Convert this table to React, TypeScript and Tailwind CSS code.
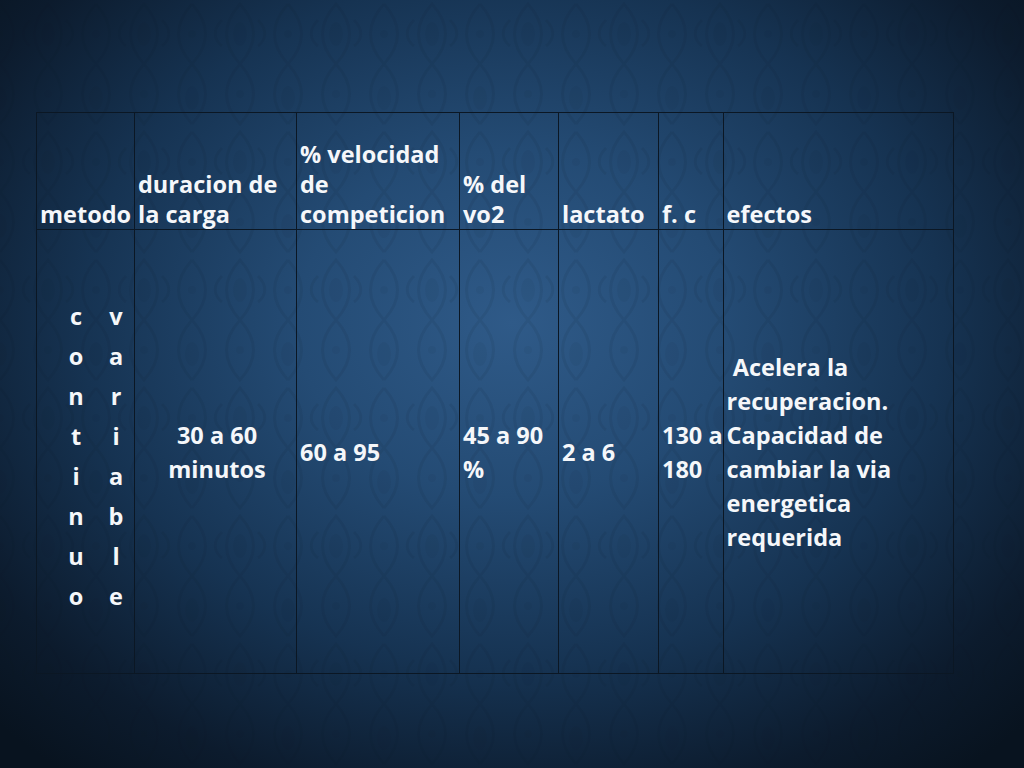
import React from "react";

const font = { fontFamily: '"Open Sans", "Noto Sans", sans-serif' };

function Damask() {
  return (
    <svg className="absolute inset-0 h-full w-full" aria-hidden="true">
      <defs>
        <pattern id="dmk" width="96" height="128" patternUnits="userSpaceOnUse">
          <g fill="none" stroke="#06111f" strokeWidth="3" opacity="0.55">
            <path d="M48 4 C30 24 30 44 48 64 C66 44 66 24 48 4 Z" />
            <path d="M48 64 C30 84 30 104 48 124 C66 104 66 84 48 64 Z" />
            <path d="M0 64 C18 44 18 24 0 4" />
            <path d="M96 64 C78 44 78 24 96 4" />
            <path d="M0 124 C18 104 18 84 0 64" />
            <path d="M96 124 C78 104 78 84 96 64" />
            <path d="M30 20 C20 30 22 40 30 46" />
            <path d="M66 20 C76 30 74 40 66 46" />
          </g>
          <g fill="#06111f" opacity="0.35">
            <ellipse cx="48" cy="34" rx="7" ry="12" />
            <ellipse cx="0" cy="98" rx="7" ry="12" />
            <ellipse cx="96" cy="98" rx="7" ry="12" />
            <circle cx="48" cy="94" r="4" />
            <circle cx="0" cy="34" r="4" />
            <circle cx="96" cy="34" r="4" />
          </g>
        </pattern>
      </defs>
      <rect width="100%" height="100%" fill="url(#dmk)" opacity="0.14" />
    </svg>
  );
}

const th =
  "border border-[#0b1724] align-bottom pl-[3px] pr-0 pb-0 text-left font-bold leading-[30px]";
const tdBase =
  "border border-[#0b1724] align-middle pl-[3px] pr-0 font-bold leading-[34px]";
const td = `${tdBase} text-left`;

export default function App() {
  const cont = ["c", "o", "n", "t", "i", "n", "u", "o"];
  const vari = ["v", "a", "r", "i", "a", "b", "l", "e"];
  return (
    <div
      className="relative h-[768px] w-[1024px] overflow-hidden bg-[radial-gradient(ellipse_70%_75%_at_50%_42%,#2f5a88_0%,#244b74_30%,#163352_60%,#0c1b2d_85%,#08131f_100%)] text-[#f5f7fa]"
      style={font}
    >
      <Damask />
      <div className="relative pl-[36px] pt-[112px]">
        <table className="table-fixed border-collapse text-[23.5px]">
          <colgroup>
            <col className="w-[98px]" />
            <col className="w-[162px]" />
            <col className="w-[163px]" />
            <col className="w-[99px]" />
            <col className="w-[100px]" />
            <col className="w-[64px]" />
            <col className="w-[230px]" />
          </colgroup>
          <thead>
            <tr className="h-[117px]">
              <th className={`${th} whitespace-nowrap pl-[2px]`}>metodo</th>
              <th className={th}>
                duracion de
                <br />
                la carga
              </th>
              <th className={th}>
                % velocidad
                <br />
                de
                <br />
                competicion
              </th>
              <th className={th}>
                % del
                <br />
                vo2
              </th>
              <th className={th}>lactato</th>
              <th className={th}>f. c</th>
              <th className={th}>efectos</th>
            </tr>
          </thead>
          <tbody>
            <tr className="h-[444px]">
              <td className={`${td} pl-[29px] pt-[8px]`}>
                <div className="flex gap-5 leading-[40px]">
                  <div className="flex w-5 flex-col items-center">
                    {cont.map((c, i) => (
                      <span key={i}>{c}</span>
                    ))}
                  </div>
                  <div className="flex w-5 flex-col items-center">
                    {vari.map((c, i) => (
                      <span key={i}>{c}</span>
                    ))}
                  </div>
                </div>
              </td>
              <td className={`${tdBase} text-center leading-[32px]`}>
                30 a 60
                <br />
                minutos
              </td>
              <td className={td}>60 a 95</td>
              <td className={td}>
                45 a 90
                <br />%
              </td>
              <td className={td}>2 a 6</td>
              <td className={`${td} whitespace-nowrap`}>
                130 a
                <br />
                180
              </td>
              <td className={`${td} whitespace-pre pl-[3px]`}>
                {" Acelera la\nrecuperacion.\nCapacidad de\ncambiar la via\nenergetica\nrequerida"}
              </td>
            </tr>
          </tbody>
        </table>
      </div>
    </div>
  );
}
